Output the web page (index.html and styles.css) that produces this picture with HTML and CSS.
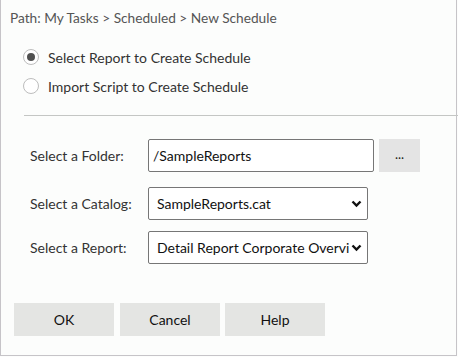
FILE: index.html
```html
<!DOCTYPE html>
<html>
<head>
<meta charset="utf-8">
<link rel="stylesheet" href="styles.css">
</head>
<body>
<div class="dialog">
  <div class="path">Path: My Tasks &gt; Scheduled &gt; New Schedule</div>
  <div class="options">
    <label class="option"><span class="radio checked"></span>Select Report to Create Schedule</label>
    <label class="option"><span class="radio"></span>Import Script to Create Schedule</label>
  </div>
  <div class="divider"></div>
  <div class="form">
    <div class="row row-folder">
      <span class="label">Select a Folder:</span>
      <div class="input">/SampleReports</div>
      <div class="browse">...</div>
    </div>
    <div class="row row-catalog">
      <span class="label">Select a Catalog:</span>
      <div class="select"><span class="val">SampleReports.cat</span><svg class="chev" width="11" height="8" viewBox="0 0 11 8"><path d="M1.5 1.5 L5.5 5.5 L9.5 1.5" fill="none" stroke="#111" stroke-width="2.4"/></svg></div>
    </div>
    <div class="row row-report">
      <span class="label">Select a Report:</span>
      <div class="select"><span class="val">Detail Report Corporate Overvi</span><svg class="chev" width="11" height="8" viewBox="0 0 11 8"><path d="M1.5 1.5 L5.5 5.5 L9.5 1.5" fill="none" stroke="#111" stroke-width="2.4"/></svg></div>
    </div>
  </div>
  <div class="buttons">
    <div class="btn">OK</div>
    <div class="btn">Cancel</div>
    <div class="btn">Help</div>
  </div>
</div>
</body>
</html>
```
FILE: styles.css
```css
html, body {
  margin: 0;
  padding: 0;
  background: #fcfdfc;
}
body {
  font-family: Lato, "Open Sans", sans-serif;
  font-size: 14px;
  color: #333;
  width: 458px;
  height: 357px;
  overflow: hidden;
}
.dialog {
  box-sizing: border-box;
  width: 457px;
  height: 356px;
  border-left: 1px solid #c6c4c8;
  border-right: 1px solid #c6c4c8;
  border-bottom: 1px solid #c6c4c8;
  background: #fcfdfc;
  padding-top: 8px;
}
.path {
  padding-left: 9px;
  height: 20px;
  line-height: 20px;
  font-size: 13.7px;
  color: #555;
}
.options {
  padding-top: 20px;
  padding-left: 22px;
  display: flex;
  flex-direction: column;
  gap: 11px;
}
.option {
  display: flex;
  align-items: center;
  height: 18px;
  color: #333;
}
.radio {
  box-sizing: border-box;
  width: 16px;
  height: 16px;
  border: 1px solid #bdbdbd;
  border-radius: 50%;
  background: #fff;
  margin-right: 9px;
  display: flex;
  align-items: center;
  justify-content: center;
}
.radio.checked::after {
  content: "";
  width: 8px;
  height: 8px;
  border-radius: 50%;
  background: #505050;
}
.divider {
  margin-top: 20px;
  margin-left: 23px;
  width: 435px;
  height: 1px;
  background: #c4c6c4;
}
.form {
  padding-top: 23px;
  padding-left: 29px;
  display: flex;
  flex-direction: column;
}
.row {
  display: flex;
  align-items: center;
}
.row-catalog {
  margin-top: 15px;
}
.row-report {
  margin-top: 11px;
}
.label {
  width: 118px;
  color: #333;
}
.input, .select {
  box-sizing: border-box;
  height: 33px;
  border: 1px solid #767676;
  border-radius: 2px;
  background: #fff;
  color: #111;
  display: flex;
  align-items: center;
  font-size: 14px;
}
.input {
  width: 226px;
  padding-left: 4px;
}
.browse {
  margin-left: 5px;
  width: 41px;
  height: 33px;
  background: #e4e4e4;
  display: flex;
  align-items: center;
  justify-content: center;
  font-size: 13px;
  color: #222;
  padding-bottom: 3px;
  box-sizing: border-box;
}
.select {
  width: 220px;
  padding-left: 8px;
  padding-right: 5px;
  justify-content: space-between;
  white-space: nowrap;
  overflow: hidden;
}
.val {
  overflow: hidden;
}
.chev {
  flex: none;
  margin-left: 2px;
}
.buttons {
  margin-top: 39px;
  padding-left: 13px;
  display: flex;
  gap: 6px;
}
.btn {
  width: 100px;
  height: 33px;
  background: #e4e5e3;
  color: #111;
  display: flex;
  align-items: center;
  justify-content: center;
  font-size: 14px;
}
.btn:nth-child(3) {
  margin-left: -1px;
}
```
